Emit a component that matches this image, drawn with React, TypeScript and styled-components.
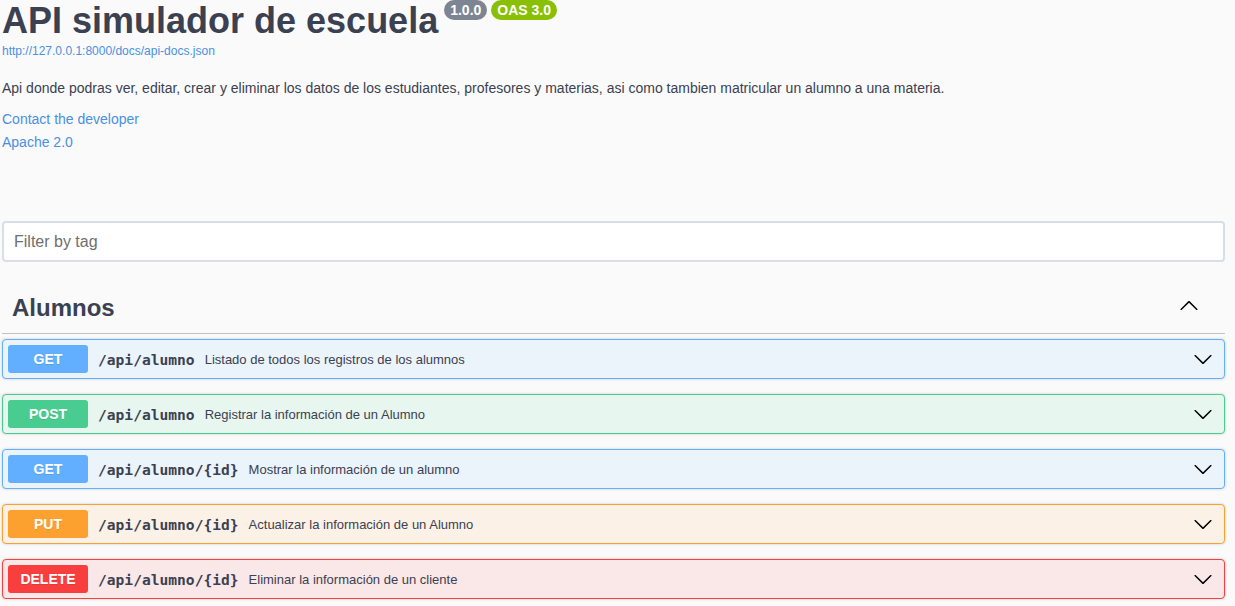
import styled, { createGlobalStyle } from 'styled-components';

const GlobalStyle = createGlobalStyle`
  html, body {
    margin: 0;
    padding: 0;
    background: #fafafa;
  }
  body {
    font-family: "Liberation Sans", Arial, sans-serif;
    color: #3b4151;
    overflow: hidden;
  }
`;

type Method = 'get' | 'post' | 'put' | 'delete';

const methodColors: Record<Method, { main: string; bg: string }> = {
  get: { main: '#61affe', bg: '#ebf3fb' },
  post: { main: '#49cc90', bg: '#e8f6f0' },
  put: { main: '#fca130', bg: '#fbf1e6' },
  delete: { main: '#f93e3e', bg: '#fae7e7' },
};

const operations: { method: Method; path: string; summary: string }[] = [
  { method: 'get', path: '/api/alumno', summary: 'Listado de todos los registros de los alumnos' },
  { method: 'post', path: '/api/alumno', summary: 'Registrar la información de un Alumno' },
  { method: 'get', path: '/api/alumno/{id}', summary: 'Mostrar la información de un alumno' },
  { method: 'put', path: '/api/alumno/{id}', summary: 'Actualizar la información de un Alumno' },
  { method: 'delete', path: '/api/alumno/{id}', summary: 'Eliminar la información de un cliente' },
];

function ArrowDown() {
  return <svg width="20" height="20" viewBox="0 0 20 20" aria-hidden="true">
    <path
      fill="#000"
      d="M17.418 6.109c.272-.268.709-.268.979 0s.271.701 0 .969l-7.908 7.83c-.27.268-.707.268-.979 0l-7.908-7.83c-.27-.268-.27-.701 0-.969.271-.268.709-.268.979 0L10 13.25l7.418-7.141z"
    />
  </svg>;
}

function ArrowUp() {
  return <svg width="20" height="20" viewBox="0 0 20 20" aria-hidden="true">
    <path
      fill="#000"
      d="M17.418 14.908c.272.268.709.268.979 0s.271-.701 0-.969l-7.908-7.83c-.27-.268-.707-.268-.979 0l-7.908 7.83c-.27.268-.27.701 0 .969.271.268.709.268.979 0L10 7.767l7.418 7.141z"
    />
  </svg>;
}

export default function App() {
  return <>
    <GlobalStyle />
    <Page>
      <Info>
        <Title>
          API simulador de escuela
          <Badge $color="#7d8492">1.0.0</Badge>
          <Badge $color="#89bf04">OAS 3.0</Badge>
        </Title>
        <UrlLink href="#">http://127.0.0.1:8000/docs/api-docs.json</UrlLink>
        <Description>
          Api donde podras ver, editar, crear y eliminar los datos de los estudiantes, profesores y materias, asi como tambien matricular un alumno a una materia.
        </Description>
        <InfoLink href="#">Contact the developer</InfoLink>
        <InfoLink href="#">Apache 2.0</InfoLink>
      </Info>

      <FilterInput placeholder="Filter by tag" />

      <TagHeader>
        <TagName>Alumnos</TagName>
        <ExpandButton><ArrowUp /></ExpandButton>
      </TagHeader>

      {operations.map((op, i) =>
        <Opblock key={i} $method={op.method}>
          <MethodBadge $method={op.method}>{op.method.toUpperCase()}</MethodBadge>
          <OpPath>{op.path}</OpPath>
          <OpSummary>{op.summary}</OpSummary>
          <OpArrow><ArrowDown /></OpArrow>
        </Opblock>
      )}
    </Page>
  </>;
}

const Page = styled.div`
  width: 1223px;
  padding-left: 2px;
`;

const Info = styled.div`
  display: flex;
  flex-direction: column;
  align-items: flex-start;
`;

const Title = styled.h2`
  margin: 0;
  font-size: 36px;
  font-weight: 700;
  line-height: 41px;
  color: #3b4151;
  display: flex;
  align-items: flex-start;
`;

const Badge = styled.span<{ $color: string }>`
  margin-left: 6px;
  padding: 0 6px;
  height: 20px;
  line-height: 20px;
  border-radius: 57px;
  background: ${p => p.$color};
  color: #fff;
  font-size: 14px;
  font-weight: 700;
  & + & {
    margin-left: 4px;
  }
`;

const UrlLink = styled.a`
  margin-top: 3px;
  font-size: 12px;
  line-height: 14px;
  color: #4990e2;
  text-decoration: none;
`;

const Description = styled.p`
  margin: 21px 0 11px;
  font-size: 14px;
  line-height: 18px;
  color: #3b4151;
`;

const InfoLink = styled.a`
  font-size: 14px;
  line-height: 23px;
  color: #4990e2;
  text-decoration: none;
`;

const FilterInput = styled.input`
  display: block;
  box-sizing: border-box;
  width: 100%;
  height: 41px;
  margin: 67px 0 21px;
  padding: 0 10px;
  border: 2px solid #d8dde7;
  border-radius: 4px;
  background: #fff;
  font-family: "Liberation Sans", Arial, sans-serif;
  font-size: 16px;
  outline: none;
  &::placeholder {
    color: #6f6f6f;
  }
`;

const TagHeader = styled.h3`
  margin: 0 0 5px;
  padding: 10px 20px 10px 10px;
  height: 30px;
  display: flex;
  align-items: center;
  border-bottom: 1px solid rgba(59, 65, 81, 0.3);
`;

const TagName = styled.span`
  flex: 1;
  font-size: 24px;
  font-weight: 700;
  color: #3b4151;
`;

const ExpandButton = styled.button`
  display: flex;
  padding: 0;
  margin-right: 6px;
  border: none;
  background: none;
  position: relative;
  top: -3px;
`;

const Opblock = styled.div<{ $method: Method }>`
  box-sizing: border-box;
  height: 40px;
  margin-bottom: 15px;
  padding: 5px;
  display: flex;
  align-items: center;
  border: 1px solid ${p => methodColors[p.$method].main};
  border-radius: 4px;
  background: ${p => methodColors[p.$method].bg};
  box-shadow: 0 0 3px rgba(0, 0, 0, 0.19);
`;

const MethodBadge = styled.span<{ $method: Method }>`
  width: 80px;
  height: 28px;
  line-height: 28px;
  text-align: center;
  border-radius: 3px;
  background: ${p => methodColors[p.$method].main};
  color: #fff;
  font-size: 14px;
  font-weight: 700;
  text-shadow: 0 1px 0 rgba(0, 0, 0, 0.1);
`;

const OpPath = styled.span`
  padding: 0 10px;
  font-family: "DejaVu Sans Mono", "Liberation Mono", monospace;
  font-size: 14.6px;
  font-weight: 700;
  color: #3b4151;
`;

const OpSummary = styled.span`
  flex: 1;
  font-size: 13px;
  color: #3b4151;
`;

const OpArrow = styled.span`
  display: flex;
  margin-right: 6px;
`;
